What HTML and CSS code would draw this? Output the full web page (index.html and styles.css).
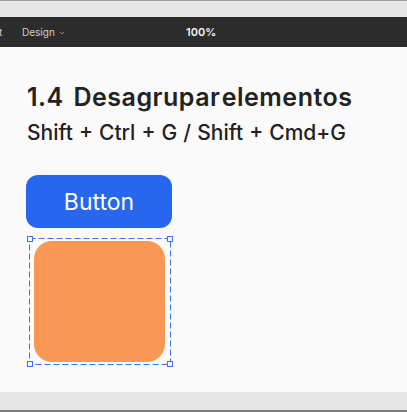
FILE: index.html
```html
<!DOCTYPE html>
<html lang="es">
<head>
<meta charset="utf-8">
<link rel="stylesheet" href="styles.css">
</head>
<body>
<div class="frame">
  <div class="topline"></div>
  <div class="topbar"></div>
  <div class="toolbar">
    <span class="tb-left">t</span>
    <span class="tb-menu">Design <svg class="chev" width="6" height="4" viewBox="0 0 6 4"><path d="M0.8 0.8 L3 3 L5.2 0.8" fill="none" stroke="#9a9a9a" stroke-width="0.9"/></svg></span>
    <span class="tb-zoom">100%</span>
  </div>
  <div class="canvas">
    <h1 class="title"><span class="num">1.4</span> Desagrupar<span class="tight"> </span>elementos</h1>
    <p class="shortcut">Shift + Ctrl + G / Shift + Cmd+G</p>
    <div class="button">Button</div>
    <div class="selection">
      <div class="shape"></div>
      <svg class="dash" width="142" height="127" viewBox="0 0 142 127">
        <rect x="0.5" y="0.5" width="141" height="126" fill="none" stroke="#3d73f0" stroke-width="1" stroke-dasharray="6 3"/>
      </svg>
      <span class="handle h-tl"></span>
      <span class="handle h-tr"></span>
      <span class="handle h-bl"></span>
      <span class="handle h-br"></span>
    </div>
  </div>
  <div class="bottombar"></div>
  <div class="bottomline"></div>
</div>
</body>
</html>
```

FILE: styles.css
```css
html, body {
  margin: 0;
  padding: 0;
  width: 407px;
  height: 412px;
  overflow: hidden;
  background: #fafafa;
  font-family: Inter, "Noto Sans", sans-serif;
}
.frame {
  display: flex;
  flex-direction: column;
  height: 412px;
}
.topline {
  height: 1px;
  background: #9c9c9c;
}
.topbar {
  height: 16px;
  background: #e6e6e6;
}
.toolbar {
  height: 30px;
  background: #2c2c2c;
  display: flex;
  align-items: center;
  position: relative;
  color: #cfcfcf;
  font-size: 10px;
}
.tb-left {
  margin-left: -1px;
  width: 23px;
}
.tb-menu {
  display: flex;
  align-items: center;
  gap: 4px;
}
.chev { margin-top: 1px; }
.tb-zoom {
  position: absolute;
  left: 186px;
  color: #f2f2f2;
  font-size: 11px;
  font-weight: 600;
}
.canvas {
  flex: 1;
  background: #fafafa;
  padding: 0 0 0 27px;
  position: relative;
}
.title {
  margin: 35px 0 0 0;
  font-size: 25px;
  font-weight: 600;
  color: #222222;
  line-height: 30px;
  letter-spacing: 0.5px;
}
.num { margin-right: 3px; }
.tight { letter-spacing: -5px; }
.shortcut {
  margin: 8px 0 0 0;
  font-size: 21px;
  font-weight: 500;
  color: #222222;
  line-height: 26px;
  word-spacing: 0.5px;
}
.button {
  margin: 29px 0 0 -1px;
  width: 146px;
  height: 53px;
  border-radius: 12px;
  background: #2667ee;
  color: #ffffff;
  font-size: 23px;
  font-weight: 400;
  display: flex;
  align-items: center;
  justify-content: center;
}
.selection {
  position: relative;
  margin: 10px 0 0 2px;
  width: 142px;
  height: 127px;
  box-sizing: border-box;
  padding: 3px 5px;
}
.shape {
  width: 131px;
  height: 121px;
  border-radius: 18px;
  background: #f99856;
}
.dash {
  position: absolute;
  left: 0;
  top: 0;
}
.handle {
  position: absolute;
  width: 4px;
  height: 4px;
  border: 1px solid #3d73f0;
  background: #f4f7ff;
}
.h-tl { left: -2px; top: -2px; }
.h-tr { right: -2px; top: -2px; }
.h-bl { left: -2px; bottom: -2px; }
.h-br { right: -2px; bottom: -2px; }
.bottombar {
  height: 18px;
  background: #e6e6e6;
}
.bottomline {
  height: 2px;
  background: #7a7a7a;
}
```
